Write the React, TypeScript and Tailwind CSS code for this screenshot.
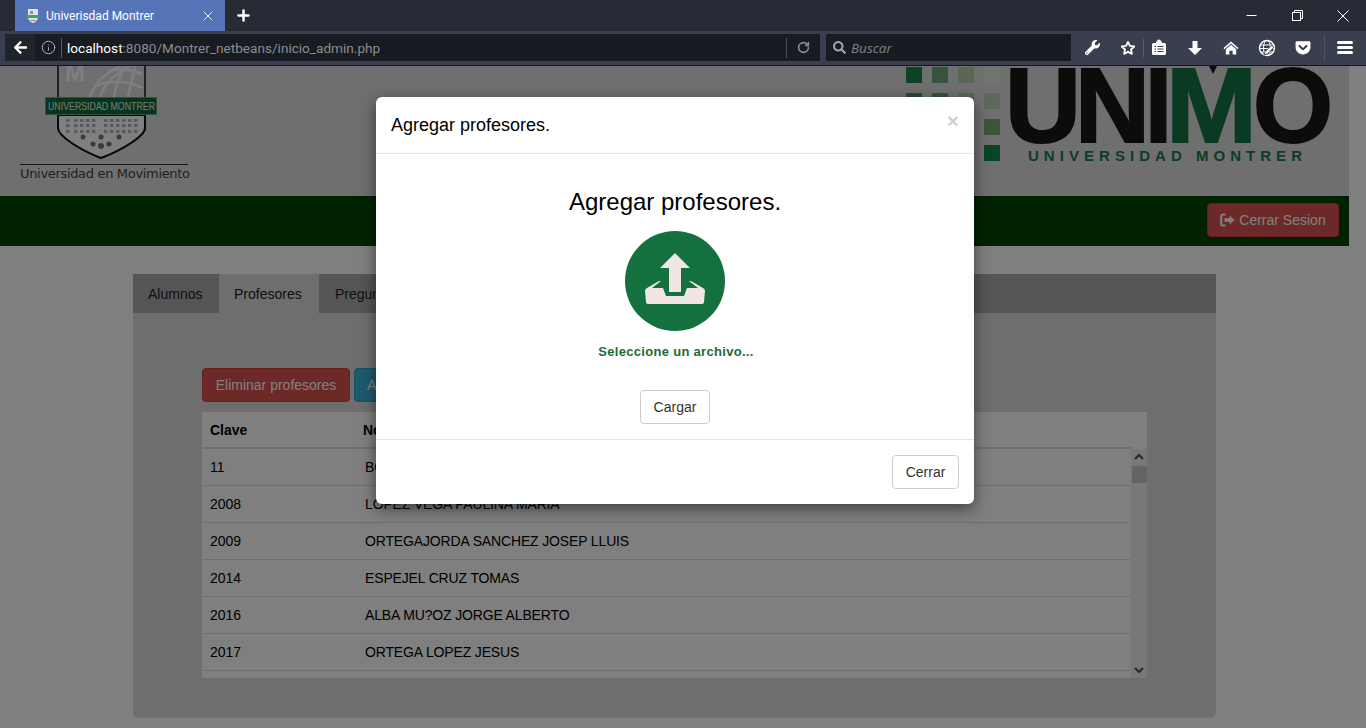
import React from 'react';
import { FaArrowLeft, FaGetPocket, FaSearch, FaWrench } from 'react-icons/fa';
import { Info, Plus, RotateCw, X } from 'lucide-react';

const rows = [
  ['11', 'BOLAÑOS RUIZ MARTHA'],
  ['2008', 'LOPEZ VEGA PAULINA MARIA'],
  ['2009', 'ORTEGAJORDA SANCHEZ JOSEP LLUIS'],
  ['2014', 'ESPEJEL CRUZ TOMAS'],
  ['2016', 'ALBA MU?OZ JORGE ALBERTO'],
  ['2017', 'ORTEGA LOPEZ JESUS'],
  ['2020', 'GARCIA LUNA PEDRO'],
];

const squares = [
  [906, 67, '#16864a'], [932, 67, '#6aa876'], [958, 67, '#b0d0a8'], [984, 67, '#e0ecdc'],
  [906, 93, '#4f9a66'], [932, 93, '#6aa876'], [958, 93, '#b0d0a8'], [984, 93, '#b8d4b0'],
  [984, 119, '#78a878'], [984, 145, '#128a48'],
];

// each big letter is placed on its own, the logo letters are wider than the font's
const letters = [
  ['U', 1005, 76, '#1b1616'],
  ['N', 1075, 75, '#1b1616'],
  ['I', 1145, 27, '#1b1616'],
  ['M', 1166, 91, '#167445'],
  ['O', 1253, 80, '#1b1616'],
];

const Favicon = () => (
  <svg width="16" height="16" viewBox="0 0 16 16">
    <path d="M3 1h10v8c0 3-2 5-5 6-3-1-5-3-5-6z" fill="#dfe3ea" />
    <rect x="5" y="3" width="3" height="3" fill="#8b93a3" />
    <rect x="1.5" y="7" width="13" height="3" fill="#3fa65a" />
    <rect x="5" y="12" width="6" height="1" fill="#8b93a3" />
  </svg>
);

const StarIcon = () => (
  <svg width="18" height="18" viewBox="0 0 18 18">
    <path d="M9 2.200l2.100 4.500 4.900.6-3.600 3.400.9 4.900L9 13.200l-4.300 2.400.9-4.900L2 7.300l4.900-.6z" fill="none" stroke="#fff" strokeWidth="2" strokeLinejoin="round" />
  </svg>
);

const ClipboardIcon = () => (
  <svg width="16" height="17" viewBox="0 0 16 17">
    <path d="M6 2.500a2 2 0 0 1 4 0h1v1.500h2.500a1.500 1.500 0 0 1 1.500 1.500v9a1.500 1.500 0 0 1-1.500 1.500h-11A1.500 1.500 0 0 1 1 14.500v-9A1.500 1.500 0 0 1 2.500 4H5V2.500z" fill="#fff" />
    <path d="M3.500 7.500h1.500M6.500 7.500h6M3.500 10h1.500M6.500 10h6M3.500 12.500h1.500M6.500 12.500h6" stroke="#3a3f50" strokeWidth="1.200" />
  </svg>
);

const DownIcon = () => (
  <svg width="16" height="16" viewBox="0 0 16 16">
    <path d="M5.500 1h5v7H15l-7 7-7-7h4.500z" fill="#fff" />
  </svg>
);

const HomeIcon = () => (
  <svg width="17" height="16" viewBox="0 0 17 16">
    <path d="M8.500 1L0.500 8l1 1.200 7-6 7 6 1-1.200z" fill="#fff" />
    <path d="M8.500 4.500L3 9.200V15h3.800v-4h3.400v4H14V9.200z" fill="#fff" />
  </svg>
);

const GlobeIcon = () => (
  <svg width="18" height="18" viewBox="0 0 18 18" fill="none" stroke="#fff">
    <circle cx="9" cy="9" r="7.500" strokeWidth="1.400" />
    <ellipse cx="9" cy="9" rx="3.500" ry="7.500" strokeWidth="1" />
    <path d="M2 6h14M2 9.500h14M2 13h14" strokeWidth="1" />
    <path d="M6 16l1.200-3.500 6.300-6.300 2.300 2.300-6.300 6.300z" fill="#fff" stroke="#3a3f50" strokeWidth="0.900" />
  </svg>
);

const SignOutIcon = () => (
  <svg width="15" height="14" viewBox="0 0 15 14" fill="none">
    <path d="M5.500 1.500H3A1.800 1.800 0 0 0 1.200 3.300v7.400A1.800 1.800 0 0 0 3 12.500h2.500" stroke="currentColor" strokeWidth="2.200" />
    <path d="M4.500 5.200h5V2.600L14.500 7l-5 4.400V8.800h-5z" fill="currentColor" />
  </svg>
);

const UploadIcon = () => (
  <svg viewBox="0 0 100 100" className="h-[100px] w-[100px]">
    <circle cx="50" cy="50" r="50" fill="#14703f" />
    <path d="M50 22L65 37H56V61H44V37H35Z" fill="#f1e6e4" />
    <path
      d="M36 50L27 57H38L41 65H59L62 57H73L64 50H66L78 57Q80 58 80 60L79 71Q79 73 77 73H23Q21 73 21 71L20 60Q20 58 22 57L34 50Z"
      fill="#f1e6e4"
    />
  </svg>
);

const ShieldLogo = () => (
  <svg width="190" height="115" viewBox="0 0 190 115" className="block">
    <path d="M58 -10V62C58 70 80 84 101 92C122 84 145 70 145 62V-10Z" fill="#dedede" stroke="#111" strokeWidth="1.500" />
    <path d="M58 49V62C58 70 80 84 101 92C122 84 145 70 145 62V49Z" fill="#fff" stroke="#111" strokeWidth="2" />
    <text x="65" y="15" fontFamily="'Liberation Sans', sans-serif" fontWeight="700" fontSize="24" fill="#fff">M</text>
    <g fill="none" stroke="#fff" strokeWidth="2.500">
      <path d="M90 31C95 15 110 2 132 -4" />
      <path d="M100 31C104 18 118 4 136 -2" />
      <path d="M114 31C116 18 122 5 128 -4" />
      <path d="M128 31C130 20 134 8 135 -2" />
      <path d="M96 20C108 14 128 14 142 22" />
      <path d="M108 5C118 2 130 3 142 8" />
    </g>
    <rect x="45.500" y="31.500" width="111" height="17" fill="#0d6b3a" stroke="#6da07e" strokeWidth="1" />
    <text x="48" y="44" textLength="107" lengthAdjust="spacingAndGlyphs" fontFamily="'Liberation Sans', sans-serif" fontSize="11" fill="#e9f2ec">UNIVERSIDAD MONTRER</text>
    <g fill="#b5b5b5">
      {[53, 58, 64].map((y, r) =>
        [74, 80, 86, 92, 104, 110, 116, 122, 128, 66, 134].map((x) => (
          <rect key={`${r}-${x}`} x={x} y={y} width="3.500" height="3" />
        ))
      )}
    </g>
    <g fill="#777">
      <circle cx="83" cy="71" r="2.500" /><circle cx="101" cy="71" r="2.500" /><circle cx="119" cy="71" r="2.500" />
      <circle cx="93" cy="78" r="2.500" /><circle cx="101" cy="80" r="3" /><circle cx="109" cy="78" r="2.500" />
    </g>
    <rect x="20" y="98" width="168" height="1" fill="#333" />
    <text x="20" y="112" textLength="170" fontFamily="'DejaVu Sans', sans-serif" fontSize="13" fill="#444">Universidad en Movimiento</text>
  </svg>
);

const UnimoLogo = () => (
  <svg width="430" height="100" viewBox="906 66 430 100" className="block">
    {squares.map(([x, y, c]) => (
      <rect key={`${x}-${y}`} x={x as number} y={y as number} width="16" height="16" fill={c as string} />
    ))}
    {letters.map(([l, x, w, c]) => (
      <text
        key={l as string}
        x={x as number}
        y="142"
        textLength={w as number}
        lengthAdjust="spacingAndGlyphs"
        fontFamily="'Liberation Sans', sans-serif"
        fontWeight="700"
        fontSize="106"
        stroke={c as string}
        strokeWidth="2"
        fill={c as string}
      >
        {l}
      </text>
    ))}
    <path d="M1209 66h8l-4 8z" fill="#1b1616" />
    <text x="1028" y="161" textLength="274" fontFamily="'Liberation Sans', sans-serif" fontWeight="700" fontSize="15" fill="#1a7a4a">UNIVERSIDAD MONTRER</text>
  </svg>
);

const App = () => {
  return (
    <div className="h-[728px] w-[1366px] overflow-hidden flex flex-col font-['Liberation_Sans',Arial,sans-serif] text-sm text-[#333]">
      {/* Tabs */}
      <div className="h-[31px] shrink-0 bg-[#272b36] flex pl-[15px] text-white">
        <div className="w-[210px] bg-[#5675b9] flex items-center pl-[10px] pr-[9px] gap-[5px]">
          <Favicon />
          <span className="flex-1 text-[12px] font-['Roboto',sans-serif] leading-none">Univerisdad Montrer</span>
          <X size={16} strokeWidth={1.2} />
        </div>
        <div className="w-[36px] flex items-center justify-center">
          <Plus size={17} strokeWidth={3.5} />
        </div>
        <div className="flex-1 flex items-center justify-end text-white">
          <div className="w-[46px] flex justify-center">
            <svg width="11" height="11" viewBox="0 0 11 11"><path d="M0.500 5.500H10.500" stroke="#fff" /></svg>
          </div>
          <div className="w-[46px] flex justify-center">
            <svg width="11" height="11" viewBox="0 0 11 11" fill="none" stroke="#fff">
              <rect x="0.500" y="2.500" width="8" height="8" /><path d="M2.500 2.500V0.500H10.500V8.500H8.500" />
            </svg>
          </div>
          <div className="w-[46px] flex justify-center">
            <svg width="12" height="12" viewBox="0 0 12 12"><path d="M0.500 0.500L11.500 11.500M11.500 0.500L0.500 11.500" stroke="#fff" /></svg>
          </div>
        </div>
      </div>

      {/* Toolbar */}
      <div className="h-[35px] shrink-0 bg-[#3a3f50] border-b border-[#14161b] flex items-center pl-[5px] pb-[1px] text-white">
        <div className="w-[815px] h-[27px] bg-[#181b20] flex items-center">
          <div className="w-[30px] h-full bg-[#20242d] flex items-center justify-center">
            <FaArrowLeft size={15} />
          </div>
          <div className="w-[26px] flex justify-center text-[#b5b8bf]">
            <Info size={15} strokeWidth={1.5} />
          </div>
          <div className="w-px h-[20px] bg-[#5a5e68]" />
          <div className="flex-1 pl-[5px] pt-[2px] text-[13.6px] font-['Roboto',sans-serif] whitespace-nowrap text-[#8a8d94]">
            <span className="text-white">localhost</span>:8080/Montrer_netbeans/inicio_admin.php
          </div>
          <div className="w-px h-[20px] bg-[#4a4e58]" />
          <div className="w-[33px] flex justify-center text-[#8a8d94]">
            <RotateCw size={13} strokeWidth={3} />
          </div>
        </div>
        <div className="ml-[6px] w-[245px] h-[27px] bg-[#181b20] flex items-center pl-[7px] gap-[5px] text-[#a0a3a9]">
          <FaSearch size={13} />
          <span className="italic text-[13.5px] pt-[2px] font-['Open_Sans',sans-serif] text-[#7f8288]">Buscar</span>
        </div>
        <div className="flex-1 flex items-center pl-[13px]">
          <div className="w-[16px] flex justify-center"><FaWrench size={15} /></div>
          <div className="w-[20px]" />
          <div className="w-[16px] flex justify-center"><StarIcon /></div>
          <div className="w-px h-[18px] bg-[#5c6070] ml-[7px] mr-[7px]" />
          <ClipboardIcon />
          <div className="w-[20px]" />
          <div className="w-[16px] flex justify-center"><DownIcon /></div>
          <div className="w-[20px]" />
          <div className="w-[16px] flex justify-center"><HomeIcon /></div>
          <div className="w-[19px]" />
          <GlobeIcon />
          <div className="w-[19px]" />
          <div className="w-[16px] flex justify-center"><FaGetPocket size={17} /></div>
          <div className="w-px h-[28px] bg-[#4d5161] ml-[13px]" />
          <div className="ml-[12px] w-[16px] flex flex-col gap-[2px]">
            <div className="h-[3px] bg-white rounded-sm" />
            <div className="h-[3px] bg-white rounded-sm" />
            <div className="h-[3px] bg-white rounded-sm" />
          </div>
        </div>
      </div>

      {/* Page */}
      <div className="relative flex-1 min-h-0 overflow-hidden bg-white">
        <div className="w-[1349px]">
          <header className="h-[130px] bg-[#dedede] flex justify-between items-start">
            <ShieldLogo />
            <div className="mr-[13px]">
              <UnimoLogo />
            </div>
          </header>
          <div className="h-[50px] bg-[#004400] flex items-center justify-end pr-[10px] pb-[2px]">
            <button className="h-[34px] w-[132px] flex items-center justify-center gap-[4px] rounded bg-[#d9534f] border border-[#d43f3a] text-white">
              <SignOutIcon /> Cerrar Sesion
            </button>
          </div>

          <main className="pt-[28px] pl-[133px]">
            <div className="w-[1083px] h-[444px] rounded-b-md bg-[#dddddd]">
              <div className="h-[39px] bg-[#aaaaaa] flex">
                <div className="w-[86px] pl-[15px] flex items-center text-[#222]">Alumnos</div>
                <div className="w-[100px] pl-[15px] flex items-center bg-[#dddddd] text-[#222]">Profesores</div>
                <div className="pl-[16px] flex items-center text-[#222]">Preguntas</div>
              </div>
              <div className="pt-[55px] pl-[69px]">
                <div className="flex gap-[4px]">
                  <button className="h-[34px] w-[148px] rounded bg-[#d9534f] border border-[#d43f3a] text-white">Eliminar profesores</button>
                  <button className="h-[34px] px-[12px] rounded bg-[#3ab4dc] border border-[#2aa0c8] text-white">Agregar profesores</button>
                </div>
                <div className="mt-[10px] w-[945px] h-[266px] bg-white text-black flex flex-col">
                  <div className="h-[37px] shrink-0 flex items-center border-b-2 border-[#ddd] font-bold mr-[16px]">
                    <div className="w-[161px] pl-[8px]">Clave</div>
                    <div>Nombre</div>
                  </div>
                  <div className="flex-1 min-h-0 flex">
                    <div className="flex-1 overflow-hidden">
                      {rows.map(([clave, nombre]) => (
                        <div key={clave} className="h-[37px] flex items-center border-b border-[#ddd] mr-[1px]">
                          <div className="w-[163px] pl-[8px]">{clave}</div>
                          <div className="tracking-[-0.15px]">{nombre}</div>
                        </div>
                      ))}
                    </div>
                    <div className="w-[16px] bg-[#f1f1f1] flex flex-col items-center">
                      <svg width="10" height="16" viewBox="0 0 10 16" className="shrink-0"><path d="M1 10l4-4 4 4" fill="none" stroke="#505050" strokeWidth="2" /></svg>
                      <div className="mt-[1px] w-[15px] h-[17px] bg-[#c8c8c8]" />
                      <div className="flex-1" />
                      <svg width="10" height="16" viewBox="0 0 10 16" className="shrink-0"><path d="M1 6l4 4 4-4" fill="none" stroke="#505050" strokeWidth="2" /></svg>
                    </div>
                  </div>
                </div>
              </div>
            </div>
          </main>
        </div>

        {/* Backdrop and modal */}
        <div className="absolute inset-0 bg-black/50" />
        <div className="absolute left-[376px] top-[31px] w-[598px] h-[407px] bg-white rounded-md shadow-[0_5px_15px_rgba(0,0,0,0.5)] text-black flex flex-col">
          <div className="h-[57px] shrink-0 border-b border-[#e5e5e5] px-[15px] flex items-center justify-between">
            <h4 className="text-[18px] leading-none">Agregar profesores.</h4>
            <span className="text-[21px] font-bold leading-none text-black/20 -mt-[10px]">×</span>
          </div>
          <div className="h-[286px] shrink-0 border-b border-[#e5e5e5] flex flex-col items-center">
            <h3 className="mt-[35px] text-[24px] leading-[26px]">Agregar profesores.</h3>
            <div className="mt-[16px]"><UploadIcon /></div>
            <div className="mt-[13px] ml-[2px] text-[13px] leading-[16px] font-bold tracking-[0.3px] text-[#1d6b34]">Seleccione un archivo...</div>
            <button className="mt-[30px] h-[34px] w-[70px] rounded border border-[#ccc] bg-white text-[#333]">Cargar</button>
          </div>
          <div className="flex-1 flex items-start justify-end pt-[15px] pr-[15px]">
            <button className="h-[34px] w-[67px] rounded border border-[#ccc] bg-white text-[#333]">Cerrar</button>
          </div>
        </div>
      </div>
    </div>
  );
};

export default App;
